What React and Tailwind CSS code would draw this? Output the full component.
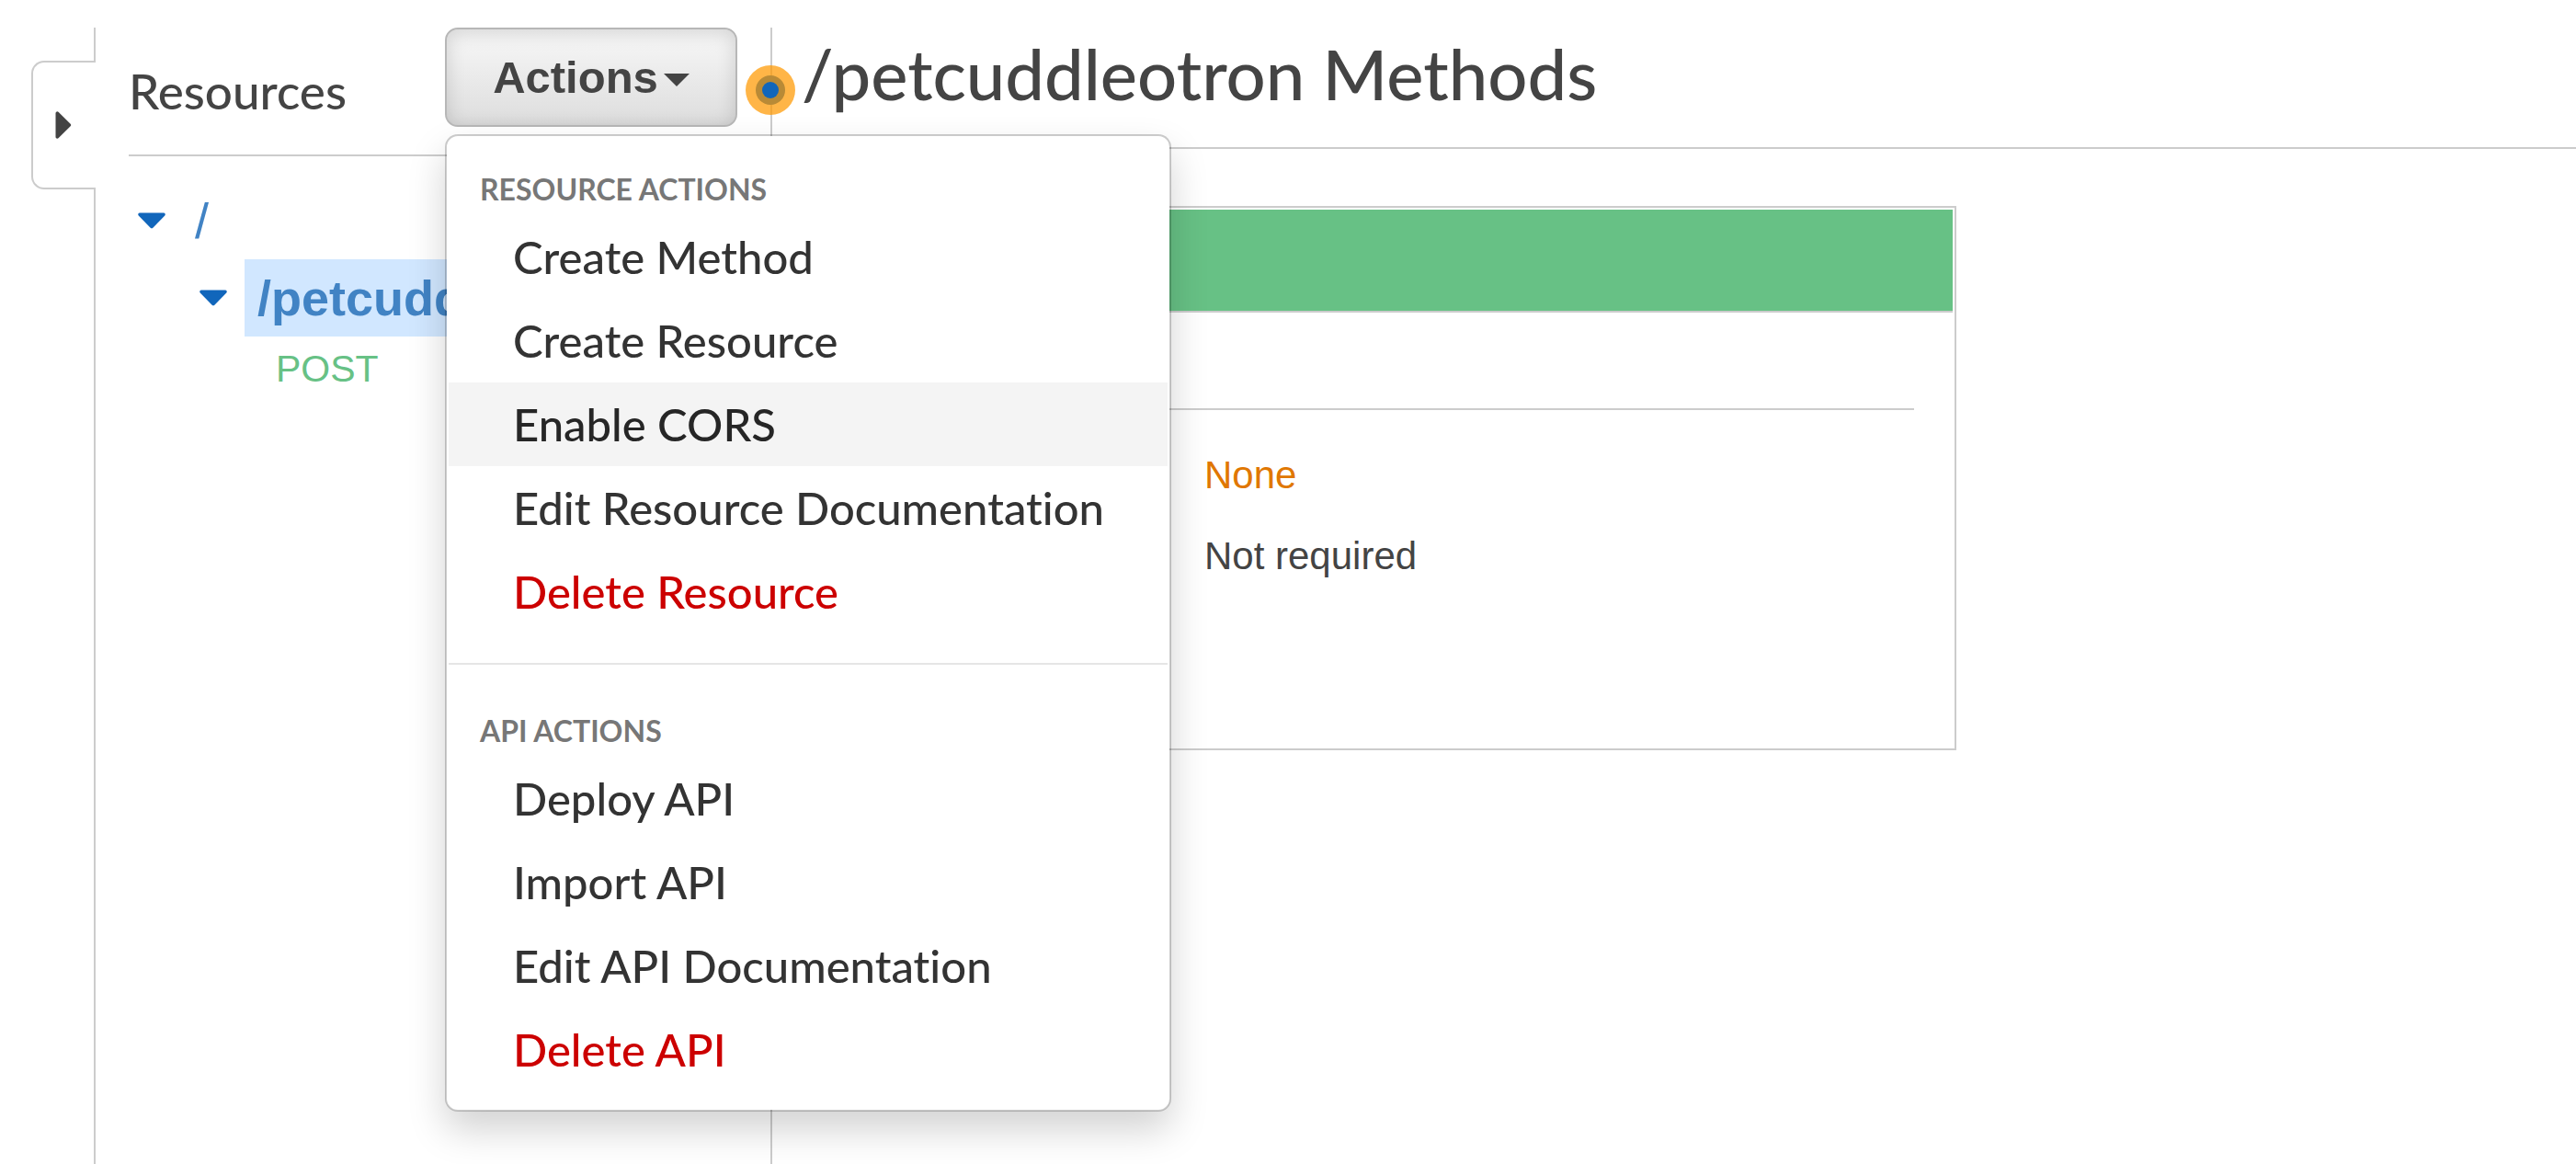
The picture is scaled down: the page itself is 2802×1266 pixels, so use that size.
import React from "react";

const resourceActions = [
  { label: "Create Method" },
  { label: "Create Resource" },
  { label: "Enable CORS", active: true },
  { label: "Edit Resource Documentation" },
  { label: "Delete Resource", danger: true },
];

const apiActions = [
  { label: "Deploy API" },
  { label: "Import API" },
  { label: "Edit API Documentation" },
  { label: "Delete API", danger: true },
];

function DownCaret() {
  return (
    <svg className="h-[18px] w-[30px] shrink-0" viewBox="0 0 30 18" aria-hidden="true">
      <path d="M2 0.5h26a1.8 1.8 0 0 1 1.3 3L16.6 16.4a2.2 2.2 0 0 1-3.2 0L0.7 3.5A1.8 1.8 0 0 1 2 0.5z" fill="#1166bb" />
    </svg>
  );
}

function MenuItem({ label, active, danger }) {
  const color = danger ? "text-[#cc0000]" : active ? "text-[#262626]" : "text-[#333333]";
  const background = active ? "bg-[#f4f4f4]" : "bg-white";
  return (
    <li role="none">
      <button
        type="button"
        role="menuitem"
        className={`block w-full pl-[70px] text-left text-[49px] leading-[91px] font-medium whitespace-nowrap ${color} ${background}`}
      >
        {label}
      </button>
    </li>
  );
}

function MenuGroup({ title, items }) {
  return (
    <section aria-label={title}>
      <h3 className="pl-[34px] text-[32px] leading-[44px] font-bold text-[#777777]">{title}</h3>
      <ul role="menu" className="pt-[6px]">
        {items.map((item) => (
          <MenuItem key={item.label} {...item} />
        ))}
      </ul>
    </section>
  );
}

function ActionsMenu() {
  return (
    <div className="absolute top-full left-0 z-20 mt-2 w-[790px] rounded-[14px] border-2 border-black/20 bg-white bg-clip-padding px-[2px] pt-[36px] pb-[20px] shadow-[0_20px_40px_rgba(0,0,0,0.175)]">
      <MenuGroup title="RESOURCE ACTIONS" items={resourceActions} />
      <hr className="mt-[32px] mb-[50px] border-t-2 border-[#e5e5e5]" />
      <MenuGroup title="API ACTIONS" items={apiActions} />
    </div>
  );
}

function Rail() {
  return (
    <div className="flex w-[104px] shrink-0 flex-col">
      <div className="h-[36px] border-r-2 border-[#cccccc]" />
      <button
        type="button"
        aria-label="Expand navigation"
        className="ml-[34px] flex h-[140px] items-center rounded-l-[14px] border-2 border-r-0 border-[#cccccc] pl-[24px]"
      >
        <svg className="h-[30px] w-[18px]" viewBox="0 0 18 30" aria-hidden="true">
          <path d="M0.5 2a1.8 1.8 0 0 1 3-1.3L16.4 13.4a2.2 2.2 0 0 1 0 3.2L3.5 29.3a1.8 1.8 0 0 1-3-1.3z" fill="#444444" />
        </svg>
      </button>
      <div className="flex-1 border-r-2 border-[#cccccc]" />
    </div>
  );
}

function ResourcesPanel() {
  return (
    <aside className="relative flex w-[736px] shrink-0 flex-col border-r-2 border-[#cccccc] pr-9 pl-9">
      <header className="flex h-[140px] items-start justify-between border-b-2 border-[#cccccc]">
        <h2 className="pt-[34px] text-[53px] leading-[70px] font-medium text-[#444444]">Resources</h2>
        <div className="relative">
          <button
            type="button"
            aria-haspopup="menu"
            aria-expanded="true"
            className="flex h-[108px] w-[318px] items-center justify-center gap-[6px] rounded-[14px] border-2 border-[#b7b7b7] bg-linear-to-b from-[#f8f8f8] to-[#dddddd] pt-[2px] font-['Liberation_Sans',sans-serif] text-[49px] font-bold text-[#444444] shadow-[inset_0_4px_20px_rgba(0,0,0,0.15)]"
          >
            Actions
            <svg className="mt-1 h-[14px] w-[28px]" viewBox="0 0 28 14" aria-hidden="true">
              <path d="M0 0h28L14 14z" fill="#444444" />
            </svg>
          </button>
          <ActionsMenu />
        </div>
      </header>
      <nav aria-label="Resource tree" className="overflow-hidden pt-[28px] font-['Liberation_Sans',sans-serif]">
        <div className="flex h-[84px] items-center gap-[32px] pl-[10px]">
          <DownCaret />
          <a href="#root" className="text-[54px] leading-[84px] text-[#4183c4]">/</a>
        </div>
        <div className="flex h-[84px] items-center gap-[19px] pl-[77px]">
          <DownCaret />
          <a href="#petcuddleotron" className="flex-1 bg-[#d1e7ff] pl-[14px] text-[54px] leading-[84px] font-bold text-[#4183c4]">
            /petcuddleotron
          </a>
        </div>
        <a href="#post" className="block pt-[10px] pl-[160px] text-[41px] leading-[50px] text-[#67c185]">POST</a>
      </nav>
      <svg className="absolute top-[41px] -right-[27px] z-10 size-[54px]" viewBox="0 0 54 54" aria-hidden="true">
        <circle cx="27" cy="27" r="27" fill="#ff9900" fillOpacity="0.72" />
        <circle cx="27" cy="27" r="16" fill="#b98a36" />
        <circle cx="27" cy="27" r="9" fill="#1166bb" />
      </svg>
    </aside>
  );
}

function MethodsPanel() {
  return (
    <main className="flex min-w-0 flex-1 flex-col pl-8">
      <h1 className="h-[132px] border-b-2 border-[#cccccc] text-[76px] leading-[100px] font-medium whitespace-nowrap text-[#444444]">
        /petcuddleotron Methods
      </h1>
      <section className="mt-[62px] mr-[674px] h-[592px] border-2 border-[#cccccc] p-[2px] font-['Liberation_Sans',sans-serif] text-[42px] leading-[50px] text-[#444444]">
        <div className="h-[112px] border-b-2 border-[#cccccc] bg-[#67c185]" />
        <div className="mx-[42px] h-[106px] border-b-2 border-[#cccccc]" />
        <div className="flex flex-col gap-[38px] pt-[46px] pl-[434px]">
          <p className="text-[#e07700]">None</p>
          <p>Not required</p>
        </div>
      </section>
    </main>
  );
}

export default function App() {
  return (
    <div className="flex min-h-screen overflow-hidden bg-white pt-[30px] font-['Lato',sans-serif] [font-variant-ligatures:none]">
      <Rail />
      <ResourcesPanel />
      <MethodsPanel />
    </div>
  );
}
